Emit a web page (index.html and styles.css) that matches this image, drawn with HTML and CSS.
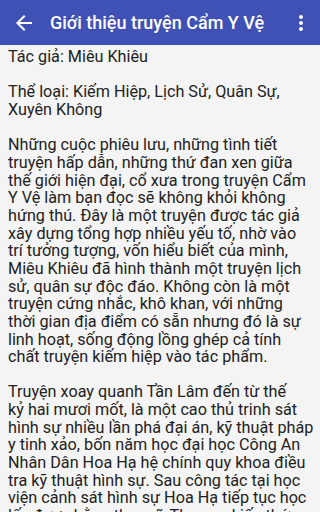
FILE: index.html
```html
<!DOCTYPE html>
<html>
<head>
<meta charset="utf-8">
<link rel="stylesheet" href="styles.css">
</head>
<body>
<header class="toolbar">
  <svg class="back" width="24" height="24" viewBox="0 0 24 24"><path d="M20 11H7.83l5.59-5.59L12 4l-8 8 8 8 1.41-1.41L7.83 13H20v-2z" fill="#fff"/></svg>
  <h1 class="title">Giới thiệu truyện Cẩm Y Vệ</h1>
  <svg class="more" width="24" height="24" viewBox="0 0 24 24"><path d="M12 8c1.1 0 2-.9 2-2s-.9-2-2-2-2 .9-2 2 .9 2 2 2zm0 2c-1.1 0-2 .9-2 2s.9 2 2 2 2-.9 2-2-.9-2-2-2zm0 6c-1.1 0-2 .9-2 2s.9 2 2 2 2-.9 2-2-.9-2-2-2z" fill="#fff"/></svg>
</header>
<main class="content">
Tác giả: Miêu Khiêu<br>
<br>
Thể loại: Kiếm Hiệp, Lịch Sử, Quân Sự,<br>
Xuyên Không<br>
<br>
Những cuộc phiêu lưu, những tình tiết<br>
truyện hấp dẫn, những thứ đan xen giữa<br>
thế giới hiện đại, cổ xưa trong truyện Cẩm<br>
Y Vệ làm bạn đọc sẽ không khỏi không<br>
hứng thú. Đây là một truyện được tác giả<br>
xây dựng tổng hợp nhiều yếu tố, nhờ vào<br>
trí tưởng tượng, vốn hiểu biết của mình,<br>
Miêu Khiêu đã hình thành một truyện lịch<br>
sử, quân sự độc đáo. Không còn là một<br>
truyện cứng nhắc, khô khan, với những<br>
thời gian địa điểm có sẵn nhưng đó là sự<br>
linh hoạt, sống động lồng ghép cả tính<br>
chất truyện kiếm hiệp vào tác phẩm.<br>
<br>
Truyện xoay quanh Tần Lâm đến từ thế<br>
kỷ hai mươi mốt, là một cao thủ trinh sát<br>
hình sự nhiều lần phá đại án, kỹ thuật pháp<br>
y tinh xảo, bốn năm học đại học Công An<br>
Nhân Dân Hoa Hạ hệ chính quy khoa điều<br>
tra kỹ thuật hình sự. Sau công tác tại học<br>
viện cảnh sát hình sự Hoa Hạ tiếp tục học<br>
lấy được bằng thạc sĩ. Thu nạp kiến thức<br>
rộng lớn, am hiểu nhiều lĩnh vực.
</main>
</body>
</html>
```

FILE: styles.css
```css
html, body {
  margin: 0;
  padding: 0;
  background: #f4f4f4;
  height: 100%;
  overflow: hidden;
}
body {
  font-family: Roboto, "Noto Sans", sans-serif;
}
.toolbar {
  height: 45px;
  background: #3f51b5;
  display: flex;
  align-items: center;
  color: #fff;
}
.back {
  margin-left: 12px;
  flex: none;
}
.title {
  margin: 0 0 0 14px;
  font-size: 18px;
  font-weight: 500;
  flex: 1;
  white-space: nowrap;
}
.more {
  margin-right: 7px;
  flex: none;
}
.content {
  display: block;
  padding: 3px 4px 0 8px;
  font-size: 16.2px;
  line-height: 17.65px;
  color: #222;
  white-space: nowrap;
}
```
